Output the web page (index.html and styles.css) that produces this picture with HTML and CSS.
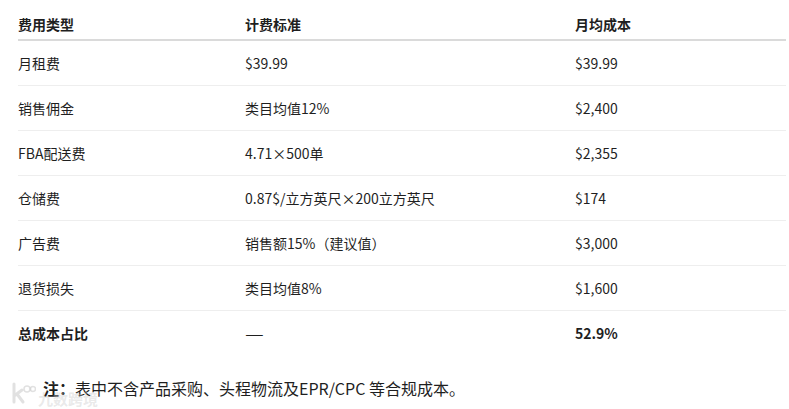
FILE: index.html
```html
<!DOCTYPE html>
<html lang="zh-CN">
<head>
<meta charset="utf-8">
<link rel="stylesheet" href="styles.css">
</head>
<body>
<div class="page">
  <table class="cost">
    <colgroup>
      <col class="c1"><col class="c2"><col class="c3">
    </colgroup>
    <thead>
      <tr><th>费用类型</th><th>计费标准</th><th>月均成本</th></tr>
    </thead>
    <tbody>
      <tr><td>月租费</td><td>$39.99</td><td>$39.99</td></tr>
      <tr><td>销售佣金</td><td>类目均值12%</td><td>$2,400</td></tr>
      <tr><td>FBA配送费</td><td>4.71×500单</td><td>$2,355</td></tr>
      <tr><td>仓储费</td><td>0.87$/立方英尺×200立方英尺</td><td>$174</td></tr>
      <tr><td>广告费</td><td>销售额15%（建议值）</td><td>$3,000</td></tr>
      <tr><td>退货损失</td><td>类目均值8%</td><td>$1,600</td></tr>
      <tr class="total"><td><b>总成本占比</b></td><td><span class="dash">—</span></td><td><b>52.9%</b></td></tr>
    </tbody>
  </table>
  <p class="note"><b>注：</b>表中不含产品采购、头程物流及EPR/CPC 等合规成本。</p>
  <div class="watermark">
    <svg class="wm-logo" width="26" height="24" viewBox="0 0 26 24" aria-hidden="true">
      <path d="M4 2 V20 M4 14 L12 8 M7 12 L13 20" stroke="rgba(200,200,200,0.55)" stroke-width="3" fill="none" stroke-linecap="round"/>
      <circle cx="17" cy="7" r="3" stroke="rgba(200,200,200,0.55)" stroke-width="1.5" fill="none"/>
      <circle cx="23" cy="7" r="2.5" stroke="rgba(200,200,200,0.55)" stroke-width="1.5" fill="none"/>
    </svg>
    <span class="wm-text">九数跨境</span>
  </div>
</div>
</body>
</html>
```
FILE: styles.css
```css
html, body {
  margin: 0;
  padding: 0;
  background: #ffffff;
}
body {
  font-family: "Noto Sans CJK SC", "Noto Sans", sans-serif;
  color: #1f1f1f;
}
.page {
  position: relative;
  padding: 8px 3px 0 18px;
  height: 401px;
}
.cost {
  width: 768px;
  border-collapse: collapse;
  table-layout: fixed;
  font-size: 14px;
}
.c1 { width: 227px; }
.c2 { width: 330px; }
.c3 { width: 211px; }
.cost th {
  text-align: left;
  font-weight: 700;
  height: 31px;
  padding: 0;
  vertical-align: middle;
  border-bottom: 2px solid #dadada;
  line-height: 20px;
}
.cost td {
  height: 44px;
  padding: 0;
  vertical-align: middle;
  border-bottom: 1px solid #eeeeee;
  line-height: 20px;
}
.cost tr.total td {
  border-bottom: none;
}
.dash {
  display: inline-block;
  transform: scaleX(1.5);
  transform-origin: left center;
}
.note {
  margin: 21px 0 0 25px;
  font-size: 16px;
  line-height: 24px;
}
.watermark {
  position: absolute;
  left: 10px;
  top: 378px;
  display: flex;
  align-items: center;
  gap: 2px;
  pointer-events: none;
}
.wm-text {
  font-size: 15px;
  font-weight: 700;
  color: rgba(200, 200, 200, 0.4);
  margin-top: 10px;
}
```
